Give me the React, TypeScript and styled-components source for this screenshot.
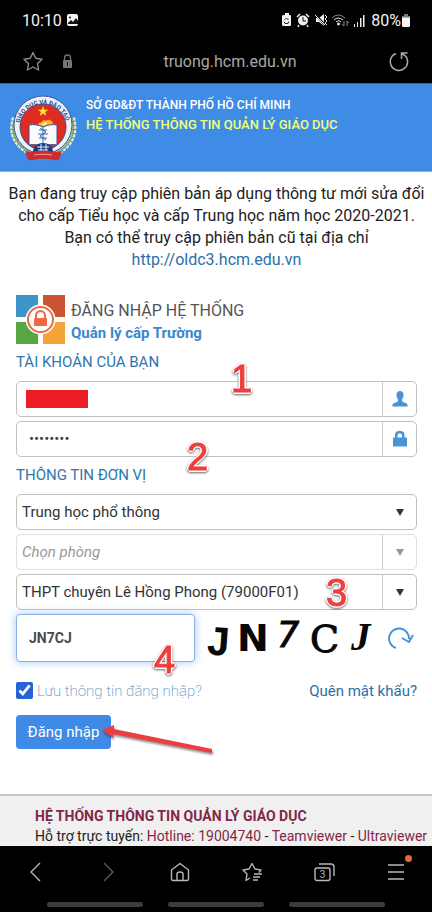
import React from "react";
import styled, { createGlobalStyle } from "styled-components";

const GlobalStyle = createGlobalStyle`
  * { box-sizing: border-box; }
  body { margin: 0; background: #fff; font-family: Roboto, "Noto Sans", sans-serif; }
  button, input, select { font-family: inherit; }
`;

const Screen = styled.div`
  display: flex;
  flex-direction: column;
  height: 100vh;
  font-size: 16px;
  color: #222;
  overflow: hidden;
`;

const StatusBar = styled.div`
  display: flex;
  align-items: center;
  flex: none;
  height: 40px;
  padding: 0 21px 0 22px;
  background: #000;
  color: #f2f2f2;
`;

const Clock = styled.span`
  font-size: 16px;
  margin-right: 4px;
`;

const StatusIcons = styled.div`
  display: flex;
  align-items: center;
  margin-left: auto;
`;

const Battery = styled.span`
  display: flex;
  align-items: center;
  font-size: 16px;
  margin-left: 6px;
`;

const AddressBar = styled.div`
  display: grid;
  grid-template-columns: 98px 1fr 70px;
  align-items: center;
  flex: none;
  height: 44px;
  padding: 0 20px;
  background: #000;
  border-bottom: 1px solid #4b5f77;
  color: #a9a9a9;
`;

const BarActions = styled.div<{ $end?: boolean }>`
  display: flex;
  align-items: center;
  gap: 14px;
  justify-content: ${(p) => (p.$end ? "flex-end" : "flex-start")};
`;

const IconButton = styled.button`
  display: flex;
  align-items: center;
  justify-content: center;
  position: relative;
  padding: 2px;
  border: 0;
  background: none;
  color: inherit;
`;

const Address = styled.span`
  text-align: center;
  font-size: 16px;
`;

const Page = styled.div`
  display: flex;
  flex-direction: column;
  flex: 1;
  min-height: 0;
  overflow: auto;
  scrollbar-width: none;
`;

const Banner = styled.header`
  display: flex;
  flex: none;
  gap: 8px;
  height: 88px;
  padding: 10px 10px 0;
  background: #3f8ce7;
  border-bottom: 1px solid #83b4ec;
`;

const BannerText = styled.div`
  padding-top: 1px;
`;

const BannerLine = styled.div<{ $accent?: boolean }>`
  font-size: ${(p) => (p.$accent ? 13 : 12)}px;
  line-height: 20px;
  font-weight: 500;
  color: ${(p) => (p.$accent ? "#f2ff76" : "#fff")};
`;

const Main = styled.main`
  flex: 1 0 auto;
  padding: 11px 15px 45px 16px;
`;

const Intro = styled.p`
  margin: 0 -10px 24px;
  text-align: center;
  line-height: 22px;
`;

const Link = styled.a`
  color: #2a6fa8;
  text-decoration: none;
`;

const TitleRow = styled.div`
  display: flex;
  align-items: flex-end;
  gap: 6px;
`;

const Title = styled.h1`
  margin: 0;
  font-size: 16px;
  line-height: 22px;
  font-weight: 400;
  color: #555;
`;

const Subtitle = styled.div`
  font-size: 15px;
  line-height: 22px;
  font-weight: 700;
  color: #3a87cc;
`;

const SectionTitle = styled.h2`
  margin: 0;
  font-size: 15px;
  line-height: 37px;
  font-weight: 400;
  color: #2e76ad;
`;

const Fields = styled.div`
  display: flex;
  flex-direction: column;
  gap: 4px;
`;

const Field = styled.div<{ $muted?: boolean }>`
  display: flex;
  position: relative;
  height: 36px;
  border: 1px solid ${(p) => (p.$muted ? "#dfdfdf" : "#c0c0c0")};
  border-radius: 5px;
  background: #fff;
  color: ${(p) => (p.$muted ? "#999" : "#333")};
`;

const TextInput = styled.input`
  flex: 1;
  min-width: 0;
  padding: 0 12px;
  border: 0;
  background: none;
  font-size: 15px;
  color: #444;
  outline: none;
`;

const Addon = styled.span<{ $line?: boolean }>`
  display: flex;
  align-items: center;
  justify-content: center;
  width: 34px;
  border-left: 1px solid ${(p) => (p.$line === false ? "transparent" : "#ccc")};
  pointer-events: none;
`;

const Select = styled.select<{ $hint?: boolean }>`
  flex: 1;
  min-width: 0;
  padding: 0 5px;
  border: 0;
  background: none;
  appearance: none;
  font-size: 15px;
  font-style: ${(p) => (p.$hint ? "italic" : "normal")};
  color: inherit;
  outline: none;
`;

const Redaction = styled.span`
  position: absolute;
  left: 9px;
  top: 8px;
  width: 62px;
  height: 18px;
  background: #ec1c24;
`;

const CaptchaRow = styled.div`
  display: flex;
  align-items: center;
  position: relative;
`;

const CaptchaInput = styled.input`
  width: 179px;
  height: 48px;
  padding: 0 12px;
  border: 1px solid #87b2e3;
  border-radius: 4px;
  box-shadow: 0 0 8px rgba(82, 152, 236, 0.55);
  font-size: 14px;
  font-weight: 700;
  color: #4a4a4a;
  outline: none;
`;

const CaptchaArt = styled.svg`
  flex: 1;
  min-width: 0;
  margin-left: 8px;
  overflow: visible;
`;

const Options = styled.div`
  display: flex;
  align-items: center;
  justify-content: space-between;
  height: 53px;
  padding-top: 4px;
  font-size: 15px;
`;

const Remember = styled.label`
  display: flex;
  align-items: center;
  gap: 4px;
  font-weight: 200;
  color: #5a8db8;
`;

const Tick = styled.input`
  width: 17px;
  height: 17px;
  margin: 0;
  accent-color: #2563d9;
`;

const SubmitRow = styled.div`
  display: flex;
  position: relative;
`;

const Submit = styled.button`
  width: 95px;
  height: 34px;
  padding: 0;
  border: 0;
  border-radius: 4px;
  background: #3f8ae6;
  font-size: 15px;
  color: #fff;
`;

const Arrow = styled.svg`
  position: absolute;
  left: 83px;
  top: 2px;
`;

const Marker = styled.span<{ $x: number; $y: number }>`
  position: absolute;
  left: ${(p) => p.$x}px;
  top: ${(p) => p.$y}px;
  font-family: "Liberation Sans", sans-serif;
  font-size: 38px;
  line-height: 38px;
  color: #ee3e3e;
  -webkit-text-stroke: 1px #ee3e3e;
  text-shadow: 2px 0 0 #fff, -2px 0 0 #fff, 0 2px 0 #fff, 0 -2px 0 #fff,
    1px 1px 0 #fff, -1px -1px 0 #fff, 1px -1px 0 #fff, -1px 1px 0 #fff;
  filter: drop-shadow(0 1px 1px rgba(0, 0, 0, 0.6));
  pointer-events: none;
`;

const Footer = styled.footer`
  flex: none;
  padding: 10px 0 0 35px;
  height: 52px;
  border-top: 2px solid #c6c6c6;
  background: #f0f0f0;
  line-height: 20px;
  white-space: nowrap;
  color: #222;
`;

const FooterTitle = styled.div`
  font-size: 14px;
  font-weight: 700;
  color: #822748;
`;

const FooterLine = styled.div`
  font-size: 14px;
`;

const FooterLink = styled.a`
  color: #822748;
  text-decoration: none;
`;

const BottomBar = styled.nav`
  flex: none;
  height: 66px;
  background: #000;
  color: #b8b8b8;
`;

const NavItems = styled.div`
  display: grid;
  grid-template-columns: repeat(6, 1fr);
  align-items: center;
  justify-items: center;
  height: 51px;
`;

const Handles = styled.div`
  display: grid;
  grid-template-columns: repeat(3, 96px);
  justify-content: center;
  gap: 25px;
  padding-top: 5px;
`;

const Handle = styled.span`
  height: 5px;
  border-radius: 3px;
  background: #3c3c3c;
`;

const Dot = styled.span`
  position: absolute;
  top: -6px;
  right: -5px;
  width: 7px;
  height: 7px;
  border-radius: 50%;
  background: #e06a35;
`;

const Emblem = () => (
  <svg width="68" height="68" viewBox="0 0 68 68" role="img" aria-label="Giáo dục và Đào tạo">
    <g fill="none" strokeWidth="6" strokeDasharray="3 1">
      <path d="M5 24C-1 42 9 54 25 61M62 24c5 18-4 30-20 37" stroke="#e9efd2" />
      <path d="M5 24C-1 42 9 54 25 61M62 24c5 18-4 30-20 37" stroke="#85a958" strokeWidth="2" />
    </g>
    <circle cx="33" cy="31" r="29" fill="#edf1f8" stroke="#39599a" />
    <circle cx="33" cy="33" r="23" fill="#df2b20" stroke="#35508a" />
    <defs>
      <path id="rim" d="M9 34A24 24 0 0 1 57 34" />
    </defs>
    <text fontSize="6" fontWeight="700" fill="#29458a" fontFamily="Roboto, sans-serif">
      <textPath href="#rim" startOffset="5">GIÁO DỤC VÀ ĐÀO TẠO</textPath>
    </text>
    <path d="M33 12l1.300 3.700h4l-3.200 2.400 1.200 3.900-3.300-2.400-3.300 2.400 1.200-3.900-3.200-2.400h4z" fill="#ffe82e" />
    <path d="M28 31c1-4 4-1 5-5 3 2 6-2 8 1 4 1 1 5-2 5-4 2-8 0-11-1z" fill="#ffb22d" />
    <path d="M31 30c3 0 4-2 6-2 0 3-3 4-6 2z" fill="#fff4a8" />
    <path d="M19 31c5-1 10 0 14 2 4-2 9-3 14-2v20c-5-1-10 0-14 1-4-1-9-2-14-1z" fill="#fafcff" stroke="#38558e" />
    <path d="M33 33v16M29 36h8M28 40h10M29 44h8M30 34l6 4-6 4 6 4" fill="none" stroke="#3869ae" />
    <path d="M23 58c0-12 20-12 20 0z" fill="#183c83" />
    <path d="M27 53h12M28 56h10M31 50v7M36 50v7" stroke="#dfebff" />
    <path d="M15 57c7 2 12-1 18 0 7-1 11 2 19 0l-3 9c-5 1-10-2-16-1-6-1-11 2-15 1z" fill="#cf2b2c" />
    <path d="M24 61c6-1 12-1 18 0" fill="none" stroke="#f4a2a2" />
  </svg>
);

const LoginLogo = () => (
  <svg width="49" height="49" viewBox="0 0 49 49" aria-hidden="true">
    <path fill="#3c94c8" d="M0 0h22v22H0z" />
    <path fill="#c85335" d="M27 0h22v22H27z" />
    <path fill="#58a744" d="M0 27h22v22H0z" />
    <path fill="#f2a43b" d="M27 27h22v22H27z" />
    <circle cx="24.500" cy="24.500" r="15" fill="#fff" />
    <circle cx="24.500" cy="24.500" r="12.500" fill="#fff" stroke="#ee6943" strokeWidth="2" />
    <path d="M20 24v-3.500a4.500 4.500 0 0 1 9 0V24" fill="none" stroke="#ee6943" strokeWidth="2" />
    <rect x="18" y="23" width="13" height="8" rx="1" fill="#ee6943" />
  </svg>
);

const PersonIcon = () => (
  <svg width="16" height="16" viewBox="0 0 16 16" fill="#4a94d6" aria-hidden="true">
    <path d="M8 0C5.700 0 4.500 1.500 4.500 3.700c0 2 .5 3.500 1.500 4.700v1.300c0 1-1 1.300-3 2C1 12.400.3 13.200.3 15.500h15.400c0-2.300-.7-3.100-2.700-3.800-2-.7-3-1-3-2V8.400c1-1.200 1.500-2.700 1.500-4.700C11.500 1.500 10.300 0 8 0z" />
  </svg>
);

const PadlockIcon = () => (
  <svg width="16" height="16" viewBox="0 0 16 16" fill="#4a94d6" aria-hidden="true">
    <path d="M1 6.500h2V4a4 4 0 0 1 4-4h1.500a4 4 0 0 1 4 4v2.500H15v9H1zM5.500 6.500H10V4.200A1.700 1.700 0 0 0 8.300 2.500H7.200a1.700 1.700 0 0 0-1.700 1.700z" />
  </svg>
);

const Caret = () => (
  <svg width="8" height="7" viewBox="0 0 8 7" fill="currentColor" aria-hidden="true">
    <path d="M0 0h8L4 7z" />
  </svg>
);

export default function App() {
  return (
    <Screen>
      <GlobalStyle />
      <StatusBar>
        <Clock>10:10</Clock>
        <svg width="13" height="12" viewBox="0 0 13 12">
          <rect x="1" width="11" height="12" rx="2" fill="#f4f4f4" />
          <path d="M2 9l3-3 2 2 3-4 2 3v3H2z" fill="#111" />
          <circle cx="4" cy="3.500" r="1" fill="#111" />
        </svg>
        <StatusIcons>
          <svg width="74" height="14" viewBox="0 0 74 14" fill="none" stroke="#eee">
            <path d="M4 2h1V0h4v2h1q1 0 1 1v9q0 1-1 1H4q-2 0-2-1V3q0-1 2-1z" fill="#f4f4f4" stroke="none" />
            <path d="M4.500 7l2-2 2 2M4 8.500l1 2h3l1-2" stroke="#222" />
            <circle cx="23" cy="7.500" r="5" fill="#eee" stroke="none" />
            <path d="M17 4l3-3M26 1l3 3M19 12l-1 2M27 12l1 2" strokeWidth="1.500" />
            <path d="M23 4v4h3" stroke="#111" />
            <path d="M36 5h3l5-4v12l-5-4h-3z" fill="#eee" stroke="none" />
            <path d="M35 1l11 12" stroke="#111" strokeWidth="2" />
            <path d="M35 2l10 10" />
            <path d="M45 2l2 2-2 2 2 2-2 2 2 2" />
            <path d="M52 5q6-6 13 0" stroke="#888" />
            <path d="M54 7q4-4 9 0M56 9q3-3 5 0" />
            <circle cx="58.500" cy="11" r="1" fill="#eee" />
            <path d="M64 8v5l-2-2M67 13V8l2 2" stroke="#888" />
          </svg>
          <svg width="11" height="13" viewBox="0 0 11 13" fill="#eee">
            <path d="M0 10h1v3H0zM3 8h1v5H3zM6 4h1.500v9H6zM9 1h1.500v12H9z" />
          </svg>
          <Battery>
            80%
            <svg width="10" height="13" viewBox="0 0 10 13">
              <path d="M3 0h4v2h2v2H1V2h2z" fill="#777" />
              <path d="M1 3.500h8V12q0 1-1 1H2q-1 0-1-1z" fill="#f4f4f4" />
            </svg>
          </Battery>
        </StatusIcons>
      </StatusBar>
      <AddressBar>
        <BarActions>
          <IconButton aria-label="Đánh dấu">
            <svg width="22" height="21" viewBox="0 0 22 21" fill="none" stroke="#8c8c8c" strokeWidth="1.400" strokeLinejoin="round">
              <path d="M11 1.500l2.800 5.800 6.200.9-4.500 4.400 1.100 6.400L11 16l-5.600 3 1.100-6.400L2 8.200l6.200-.9z" />
            </svg>
          </IconButton>
          <IconButton aria-label="Bảo mật">
            <svg width="11" height="15" viewBox="0 0 11 15">
              <path d="M2.500 7V4a3 3 0 0 1 6 0v3" fill="none" stroke="#757575" strokeWidth="1.300" />
              <rect x="1" y="6" width="9" height="8" rx="1" fill="#757575" />
              <path d="M5.500 8v4" stroke="#111" />
            </svg>
          </IconButton>
        </BarActions>
        <Address>truong.hcm.edu.vn</Address>
        <BarActions $end>
          <IconButton aria-label="Tải lại">
            <svg width="22" height="22" viewBox="0 0 22 22" fill="none" stroke="#aaa" strokeWidth="1.500">
              <path d="M8 2.500A8.700 8.700 0 1 0 17 4.500L13.500 2.500M19.500 2h-6v6" />
            </svg>
          </IconButton>
        </BarActions>
      </AddressBar>
      <Page>
        <Banner>
          <Emblem />
          <BannerText>
            <BannerLine>SỞ GD&amp;ĐT THÀNH PHỐ HỒ CHÍ MINH</BannerLine>
            <BannerLine $accent>HỆ THỐNG THÔNG TIN QUẢN LÝ GIÁO DỤC</BannerLine>
          </BannerText>
        </Banner>
        <Main>
          <Intro>
            Bạn đang truy cập phiên bản áp dụng thông tư mới sửa đổi cho cấp Tiểu học và cấp Trung học năm học 2020-2021.
            <br />
            Bạn có thể truy cập phiên bản cũ tại địa chỉ
            <br />
            <Link href="#old">http://oldc3.hcm.edu.vn</Link>
          </Intro>
          <TitleRow>
            <LoginLogo />
            <div>
              <Title>ĐĂNG NHẬP HỆ THỐNG</Title>
              <Subtitle>Quản lý cấp Trường</Subtitle>
            </div>
          </TitleRow>
          <SectionTitle>TÀI KHOẢN CỦA BẠN</SectionTitle>
          <Fields>
            <Field>
              <TextInput aria-label="Tài khoản" />
              <Redaction />
              <Addon><PersonIcon /></Addon>
              <Marker $x={214} $y={-22}>1</Marker>
            </Field>
            <Field>
              <TextInput type="password" aria-label="Mật khẩu" defaultValue="abcdefgh" />
              <Addon><PadlockIcon /></Addon>
              <Marker $x={170} $y={16}>2</Marker>
            </Field>
          </Fields>
          <SectionTitle>THÔNG TIN ĐƠN VỊ</SectionTitle>
          <Fields>
            <Field>
              <Select aria-label="Cấp học"><option>Trung học phổ thông</option></Select>
              <Addon $line={false}><Caret /></Addon>
            </Field>
            <Field $muted>
              <Select $hint aria-label="Phòng"><option>Chọn phòng</option></Select>
              <Addon><Caret /></Addon>
            </Field>
            <Field>
              <Select aria-label="Trường"><option>THPT chuyên Lê Hồng Phong (79000F01)</option></Select>
              <Addon><Caret /></Addon>
              <Marker $x={309} $y={-1}>3</Marker>
            </Field>
            <CaptchaRow>
              <CaptchaInput aria-label="Mã xác nhận" defaultValue="JN7CJ" />
              <CaptchaArt height="48" viewBox="0 0 180 48" preserveAspectRatio="xMinYMid meet" role="img" aria-label="JN7CJ">
                <g fill="#080808" fontWeight="700">
                  <text x="3" y="41" fontFamily="Liberation Mono" fontSize="42" transform="rotate(4 14 28)">J</text>
                  <text x="34" y="37" fontFamily="DejaVu Sans" fontSize="38">N</text>
                  <text x="74" y="33" fontFamily="DejaVu Sans" fontSize="35" fontWeight="400" fontStyle="italic" stroke="#080808">7</text>
                  <text x="107" y="38" fontFamily="DejaVu Serif" fontSize="38" fontWeight="400" stroke="#080808">C</text>
                  <text x="148" y="36" fontFamily="Liberation Serif" fontSize="39" fontStyle="italic">J</text>
                </g>
              </CaptchaArt>
              <IconButton aria-label="Đổi mã">
                <svg width="29" height="25" viewBox="0 0 29 25" fill="none" stroke="#4392dc" strokeWidth="2">
                  <path d="M10 22A10 10 0 1 1 23 13M16 12l7 4 4-7" />
                </svg>
              </IconButton>
              <Marker $x={138} $y={27}>4</Marker>
            </CaptchaRow>
          </Fields>
          <Options>
            <Remember><Tick type="checkbox" defaultChecked />Lưu thông tin đăng nhập?</Remember>
            <Link href="#forgot">Quên mật khẩu?</Link>
          </Options>
          <SubmitRow>
            <Submit>Đăng nhập</Submit>
            <Arrow width="118" height="42" viewBox="0 0 118 42" aria-hidden="true">
              <g filter="drop-shadow(1px 2px 1px rgba(0,0,0,.45))">
                <path d="M3 13L15 8v4l98 20v4L14 17v4z" fill="#ec3d40" />
              </g>
            </Arrow>
          </SubmitRow>
        </Main>
        <Footer>
          <FooterTitle>HỆ THỐNG THÔNG TIN QUẢN LÝ GIÁO DỤC</FooterTitle>
          <FooterLine>
            Hỗ trợ trực tuyến: <FooterLink href="#hotline">Hotline: 19004740</FooterLink> - <FooterLink href="#teamviewer">Teamviewer</FooterLink> - <FooterLink href="#ultraviewer">Ultraviewer</FooterLink>
          </FooterLine>
        </Footer>
      </Page>
      <BottomBar>
        <NavItems>
          <IconButton aria-label="Quay lại">
            <svg width="20" height="20" viewBox="0 0 20 20" fill="none" stroke="currentColor" strokeWidth="1.400"><path d="M14 1L5 10l9 9" /></svg>
          </IconButton>
          <IconButton aria-label="Tiến" disabled>
            <svg width="20" height="20" viewBox="0 0 20 20" fill="none" stroke="#5b5b5b" strokeWidth="1.400"><path d="M6 1l9 9-9 9" /></svg>
          </IconButton>
          <IconButton aria-label="Trang chủ">
            <svg width="20" height="20" viewBox="0 0 20 20" fill="none" stroke="currentColor" strokeWidth="1.400" strokeLinejoin="round">
              <path d="M1.500 8L10 1.500 18.500 8v9q0 1.500-1.500 1.500H3q-1.500 0-1.500-1.500zM7 18v-6q0-2 3-2t3 2v6" />
            </svg>
          </IconButton>
          <IconButton aria-label="Dấu trang">
            <svg width="21" height="20" viewBox="0 0 21 20" fill="none" stroke="currentColor" strokeWidth="1.400" strokeLinejoin="round">
              <path d="M8 16l-4 2.500 1-6.500L1 8l6-1 3-5.500L13 7l6 1-2 2.500M12 12h8M11 15h7M11 18h5" />
            </svg>
          </IconButton>
          <IconButton aria-label="Thẻ đang mở">
            <svg width="21" height="20" viewBox="0 0 21 20" fill="none" stroke="currentColor" strokeWidth="1.400">
              <rect x="1" y="6" width="15" height="12.500" rx="2" />
              <path d="M5 2h12q3 0 3 3v9" />
              <text x="8.500" y="16" textAnchor="middle" fontSize="10" fontFamily="Roboto, sans-serif" fill="currentColor" stroke="none">3</text>
            </svg>
          </IconButton>
          <IconButton aria-label="Trình đơn">
            <svg width="18" height="18" viewBox="0 0 18 18" stroke="currentColor" strokeWidth="1.400"><path d="M1 2h16M1 9h16M1 16h16" /></svg>
            <Dot />
          </IconButton>
        </NavItems>
        <Handles><Handle /><Handle /><Handle /></Handles>
      </BottomBar>
    </Screen>
  );
}
